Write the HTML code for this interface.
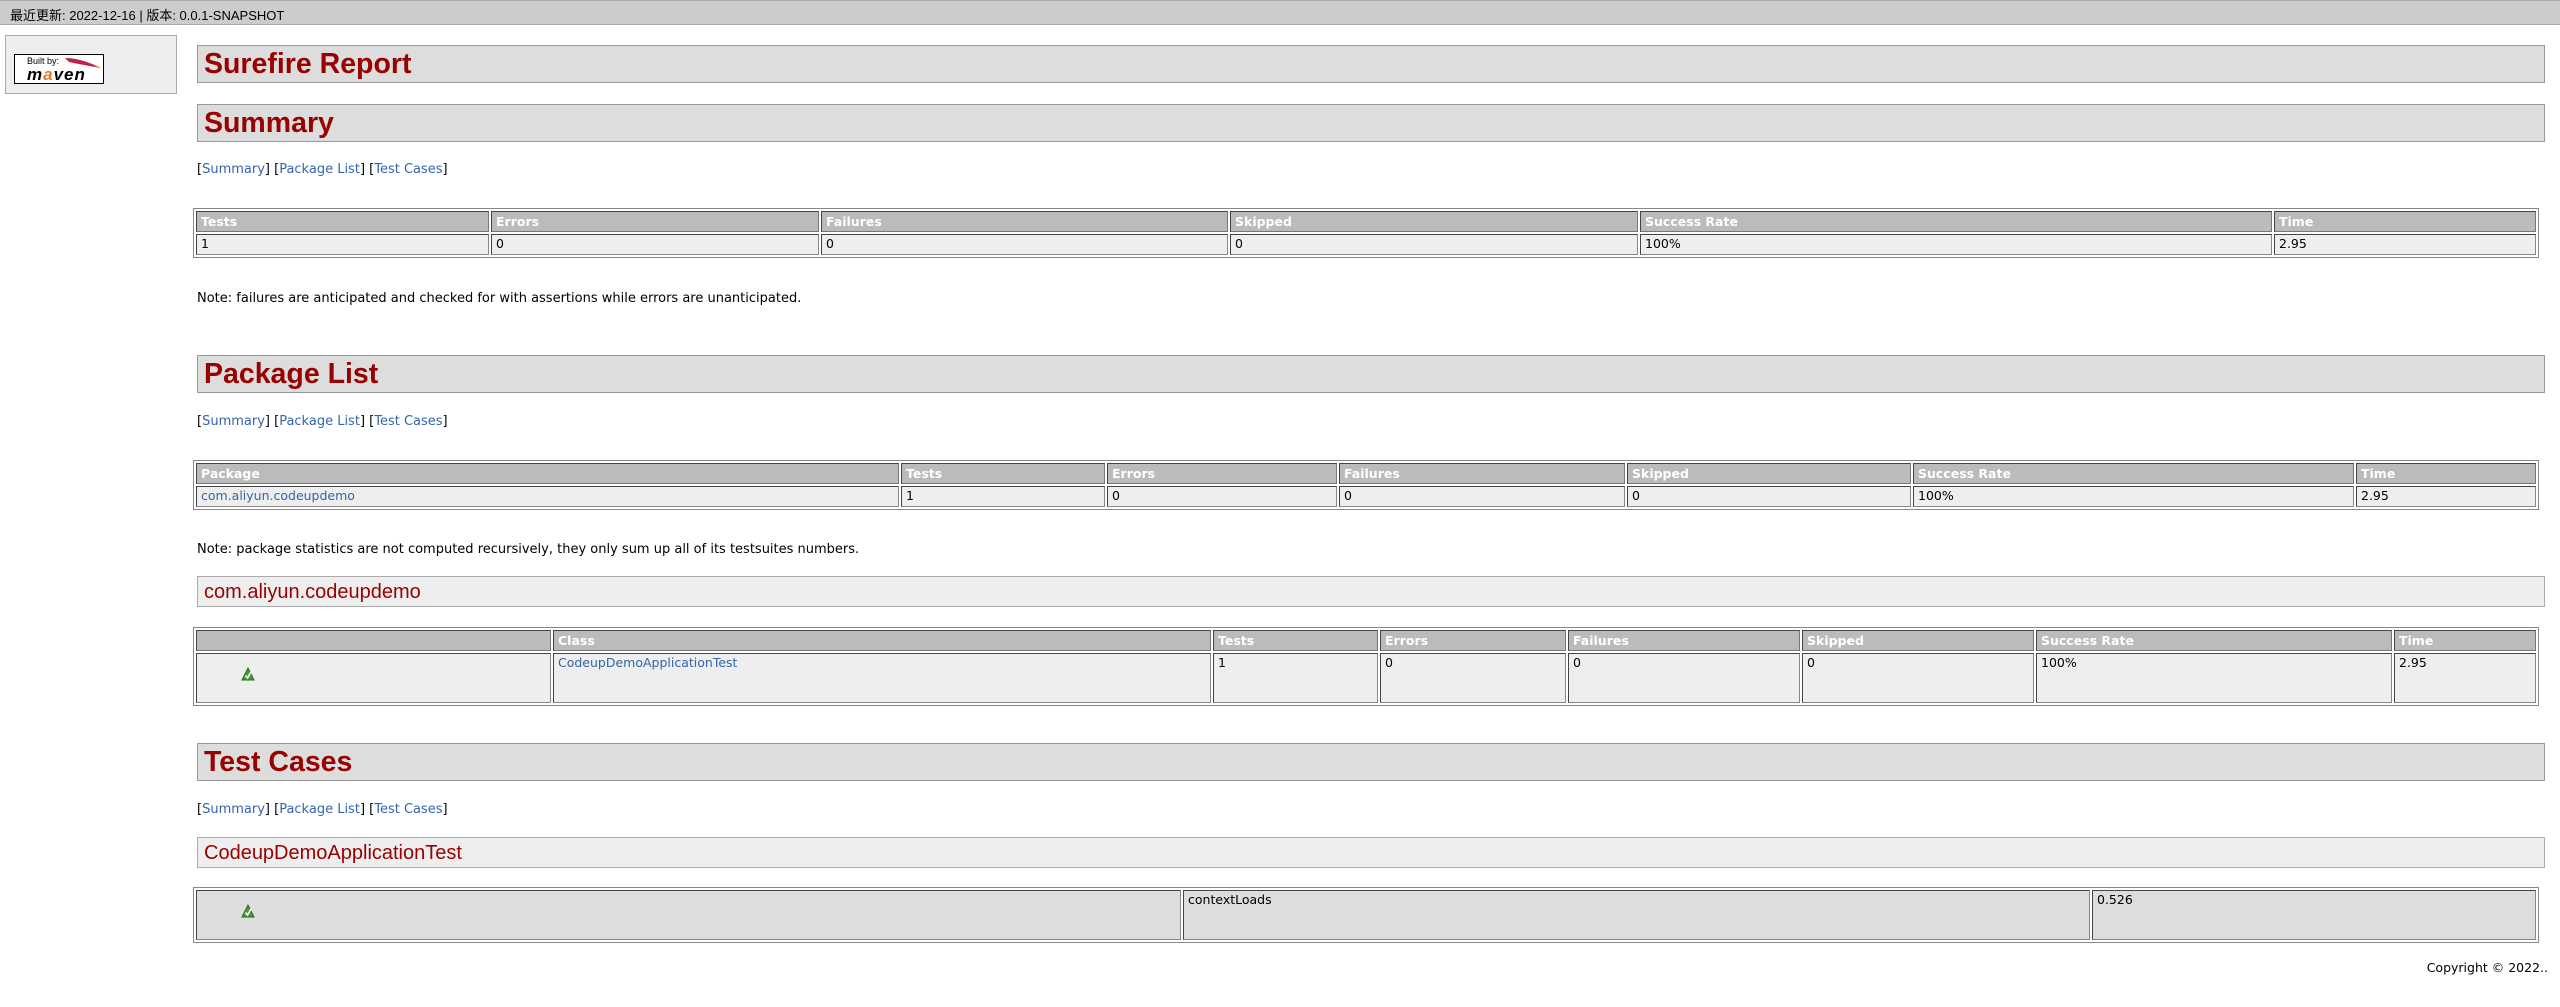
<!DOCTYPE html>
<html><head><meta charset="utf-8"><style>
*{box-sizing:border-box}
body{margin:0;width:2560px;height:1007px;background:#fff;font-family:"DejaVu Sans","Noto Sans CJK SC",sans-serif;font-size:13px;color:#000;position:relative;overflow:hidden}
.top{position:absolute;left:0;top:0;width:2560px;height:25px;background:#ccc;border-top:1px solid #aaa;border-bottom:1px solid #aaa;padding:4px 10px;font-size:13px;font-family:"Liberation Sans","Noto Sans CJK SC",sans-serif}
.side{position:absolute;left:5px;top:35px;width:172px;height:59px;background:#eee;border:1px solid #aaa}
.logo{position:absolute;left:8px;top:18px;width:90px;height:30px;background:#fff;border:1px solid #000;font-family:"Liberation Sans",sans-serif}
h2{margin:0;position:absolute;left:197px;width:2348px;height:38px;background:#ddd;border:1px solid #999;color:#900;font-size:28.5px;font-weight:bold;padding:0 6px;line-height:36px;font-family:"Liberation Sans",sans-serif}
h3{margin:0;position:absolute;left:197px;width:2348px;height:31px;background:#eee;border:1px solid #aaa;color:#900;font-size:20px;font-weight:normal;padding:0 6px;line-height:30px;font-family:"Liberation Sans",sans-serif}
.nav{position:absolute;left:197px;color:#000}
.nav a{color:#36a;text-decoration:none}
.note{position:absolute;left:197px}
table{position:absolute;left:193px;width:2346px;border-collapse:separate;border-spacing:2px;border:1px solid #888;table-layout:fixed}
th{background:#bbb;color:#fff;font-weight:bold;text-align:left;height:21px;padding:0 4px;border:1px solid;border-color:#444 #777 #777 #444;font-size:12.5px;white-space:nowrap;overflow:hidden}
td{background:#eee;vertical-align:top;padding:1px 4px;border:1px solid;border-color:#444 #888 #888 #444;height:21px;font-size:12.5px}
td a{color:#36a;text-decoration:none}
.ico{display:block;margin:12px 0 0 40px}
.copy{position:absolute;right:12px;top:960px;font-size:12.5px}
</style></head><body>
<div class="top">最近更新: 2022-12-16 | 版本: 0.0.1-SNAPSHOT</div>
<div class="side"><div class="logo">
<div style="position:absolute;left:12px;top:1px;font-size:9px">Built by:</div>
<svg style="position:absolute;left:48px;top:1px" width="40" height="14" viewBox="0 0 40 14"><path d="M2 2 Q18 2 38 12 Q20 9 6 6Z" fill="#c0204a"/><path d="M30 8 L38 12 L32 10Z" fill="#e8a020"/></svg>
<div style="position:absolute;left:12px;top:11px;font-size:17px;font-weight:bold;font-style:italic;letter-spacing:1px;line-height:18px">m<span style="color:#e87a1e">a</span>ven</div>
</div></div>

<h2 style="top:45px">Surefire Report</h2>
<h2 style="top:104px">Summary</h2>
<div class="nav" style="top:162px">[<a>Summary</a>] [<a>Package List</a>] [<a>Test Cases</a>]</div>
<table style="top:208px">
<colgroup><col style="width:293px"><col style="width:328px"><col style="width:407px"><col style="width:408px"><col style="width:632px"><col></colgroup>
<tr><th>Tests</th><th>Errors</th><th>Failures</th><th>Skipped</th><th>Success Rate</th><th>Time</th></tr>
<tr><td>1</td><td>0</td><td>0</td><td>0</td><td>100%</td><td>2.95</td></tr>
</table>
<div class="note" style="top:291px">Note: failures are anticipated and checked for with assertions while errors are unanticipated.</div>

<h2 style="top:355px">Package List</h2>
<div class="nav" style="top:414px">[<a>Summary</a>] [<a>Package List</a>] [<a>Test Cases</a>]</div>
<table style="top:460px">
<colgroup><col style="width:703px"><col style="width:204px"><col style="width:230px"><col style="width:286px"><col style="width:284px"><col style="width:441px"><col></colgroup>
<tr><th>Package</th><th>Tests</th><th>Errors</th><th>Failures</th><th>Skipped</th><th>Success Rate</th><th>Time</th></tr>
<tr><td><a>com.aliyun.codeupdemo</a></td><td>1</td><td>0</td><td>0</td><td>0</td><td>100%</td><td>2.95</td></tr>
</table>
<div class="note" style="top:542px">Note: package statistics are not computed recursively, they only sum up all of its testsuites numbers.</div>

<h3 style="top:576px">com.aliyun.codeupdemo</h3>
<table style="top:627px">
<colgroup><col style="width:355px"><col style="width:658px"><col style="width:165px"><col style="width:186px"><col style="width:232px"><col style="width:232px"><col style="width:356px"><col></colgroup>
<tr><th></th><th>Class</th><th>Tests</th><th>Errors</th><th>Failures</th><th>Skipped</th><th>Success Rate</th><th>Time</th></tr>
<tr><td style="height:50px"><svg class="ico" width="14" height="14" viewBox="0 0 14 14"><path d="M7 1 L13 13 L1 13Z" fill="#4a9a3a" stroke="#2c6a22"/><path d="M4.5 8.5 L6.5 11 L10 5" stroke="#fff" stroke-width="1.6" fill="none"/></svg></td><td><a>CodeupDemoApplicationTest</a></td><td>1</td><td>0</td><td>0</td><td>0</td><td>100%</td><td>2.95</td></tr>
</table>

<h2 style="top:743px">Test Cases</h2>
<div class="nav" style="top:802px">[<a>Summary</a>] [<a>Package List</a>] [<a>Test Cases</a>]</div>
<h3 style="top:837px">CodeupDemoApplicationTest</h3>
<table style="top:887px">
<colgroup><col style="width:985px"><col style="width:907px"><col></colgroup>
<tr><td style="height:50px;background:#ddd"><svg class="ico" width="14" height="14" viewBox="0 0 14 14"><path d="M7 1 L13 13 L1 13Z" fill="#4a9a3a" stroke="#2c6a22"/><path d="M4.5 8.5 L6.5 11 L10 5" stroke="#fff" stroke-width="1.6" fill="none"/></svg></td><td style="background:#ddd">contextLoads</td><td style="background:#ddd">0.526</td></tr>
</table>

<div class="copy">Copyright © 2022..</div>
</body></html>
